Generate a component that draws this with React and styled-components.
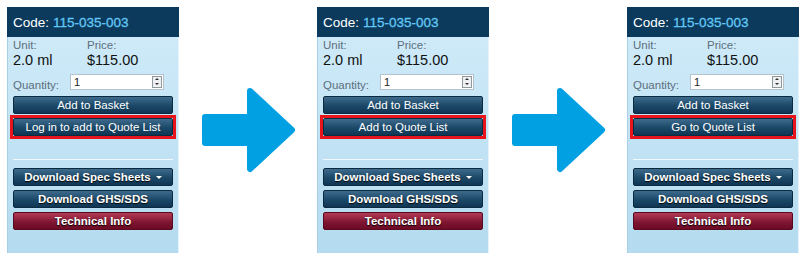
import React from 'react';
import styled, { createGlobalStyle } from 'styled-components';

const GlobalStyle = createGlobalStyle`
  body {
    margin: 0;
    background: #fff;
    font-family: "Liberation Sans", Arial, sans-serif;
  }
`;

const Page = styled.div`
  display: grid;
  grid-template-columns: 172px 138px 172px 138px 172px;
  padding: 7px 0 0 7px;
  width: 807px;
  height: 262px;
  box-sizing: border-box;
`;

const Panel = styled.div`
  height: 246px;
  display: flex;
  flex-direction: column;
  background: linear-gradient(#d2ecfa, #b4dbef);
  border-left: 1px solid #a9cfe4;
  border-right: 1px solid #e4f3fb;
  box-sizing: border-box;
`;

const Header = styled.div`
  height: 30px;
  background: #0b3a5d;
  color: #fff;
  font-size: 13.5px;
  display: flex;
  align-items: center;
  padding-left: 6px;
  margin: 0 -1px;
`;

const Code = styled.span`
  color: #62c7f4;
  margin-left: 4px;
  -webkit-text-stroke: 0.3px #62c7f4;
`;

const Body = styled.div`
  padding: 3px 5px 0 5px;
  display: flex;
  flex-direction: column;
`;

const InfoRow = styled.div`
  display: grid;
  grid-template-columns: 74px 1fr;
`;

const Label = styled.div`
  color: #5d6f7d;
  font-size: 11.5px;
  line-height: 11px;
`;

const Value = styled.div`
  color: #111;
  font-size: 14.5px;
  line-height: 16px;
  margin-top: 1px;
`;

const QtyRow = styled.div`
  display: grid;
  grid-template-columns: 57px 94px;
  align-items: center;
  margin-top: 4px;
  height: 16px;
`;

const QtyLabel = styled(Label)`
  padding-top: 8px;
`;

const QtyInput = styled.div`
  height: 16px;
  background: #fff;
  border: 1px solid #b5c3cc;
  box-sizing: border-box;
  display: flex;
  align-items: center;
  justify-content: space-between;
  padding: 0 1px 0 3px;
  font-size: 11px;
  color: #222;
`;

const Spinner = styled.div`
  width: 10px;
  height: 12px;
  border: 1px solid #8f9a9f;
  box-sizing: border-box;
  background: #eef0f1;
  display: flex;
  flex-direction: column;
  align-items: center;
  justify-content: space-around;
  & span {
    width: 0;
    height: 0;
    border-left: 2px solid transparent;
    border-right: 2px solid transparent;
  }
  & span.up { border-bottom: 2px solid #333; }
  & span.down { border-top: 2px solid #333; }
`;

const Button = styled.div`
  height: 18px;
  box-sizing: border-box;
  border: 1px solid ${p => (p.red ? '#5a0a1e' : '#0a2a42')};
  border-radius: 2px;
  background: ${p => p.red
    ? 'linear-gradient(#b33a55, #7d1430 60%, #6c0b25)'
    : 'linear-gradient(#3e6b8c, #1c4868 55%, #0f3654)'};
  color: #fff;
  font-size: 11.5px;
  font-weight: ${p => (p.bold ? 'bold' : 'normal')};
  text-shadow: ${p => (p.bold ? '0 1px 1px #000' : 'none')};
  display: flex;
  align-items: center;
  justify-content: center;
  margin-top: ${p => p.gap || 0}px;
`;

const Caret = styled.span`
  display: inline-block;
  margin-left: 5px;
  border-left: 3px solid transparent;
  border-right: 3px solid transparent;
  border-top: 3px solid #fff;
  vertical-align: middle;
`;

const Highlight = styled.div`
  border: 3px solid #e8141c;
  margin: 1px -3px 0;
`;

const Divider = styled.div`
  height: 1px;
  background: #f2f9fd;
  margin-top: 20px;
`;

const ArrowCell = styled.div`
  display: flex;
  align-items: center;
  justify-content: center;
  height: 246px;
  padding-bottom: 8px;
`;

function Arrow() {
  return (
    <svg width="96" height="86" viewBox="0 0 96 86">
      <path
        d="M5 30 L50 30 L50 4 L92 43 L50 82 L50 56 L5 56 Z"
        fill="#00a0e3"
        stroke="#00a0e3"
        strokeWidth="6"
        strokeLinejoin="round"
      />
    </svg>
  );
}

function ProductPanel({ quoteLabel }) {
  return (
    <Panel>
      <Header>
        Code:<Code>115-035-003</Code>
      </Header>
      <Body>
        <InfoRow>
          <Label>Unit:</Label>
          <Label>Price:</Label>
          <Value>2.0 ml</Value>
          <Value>$115.00</Value>
        </InfoRow>
        <QtyRow>
          <QtyLabel>Quantity:</QtyLabel>
          <QtyInput>
            1
            <Spinner>
              <span className="up" />
              <span className="down" />
            </Spinner>
          </QtyInput>
        </QtyRow>
        <Button gap={8}>Add to Basket</Button>
        <Highlight>
          <Button>{quoteLabel}</Button>
        </Highlight>
        <Divider />
        <Button bold gap={8}>
          Download Spec Sheets<Caret />
        </Button>
        <Button bold gap={4}>Download GHS/SDS</Button>
        <Button bold red gap={4}>Technical Info</Button>
      </Body>
    </Panel>
  );
}

export default function App() {
  return (
    <>
      <GlobalStyle />
      <Page>
        <ProductPanel quoteLabel="Log in to add to Quote List" />
        <ArrowCell><Arrow /></ArrowCell>
        <ProductPanel quoteLabel="Add to Quote List" />
        <ArrowCell><Arrow /></ArrowCell>
        <ProductPanel quoteLabel="Go to Quote List" />
      </Page>
    </>
  );
}
